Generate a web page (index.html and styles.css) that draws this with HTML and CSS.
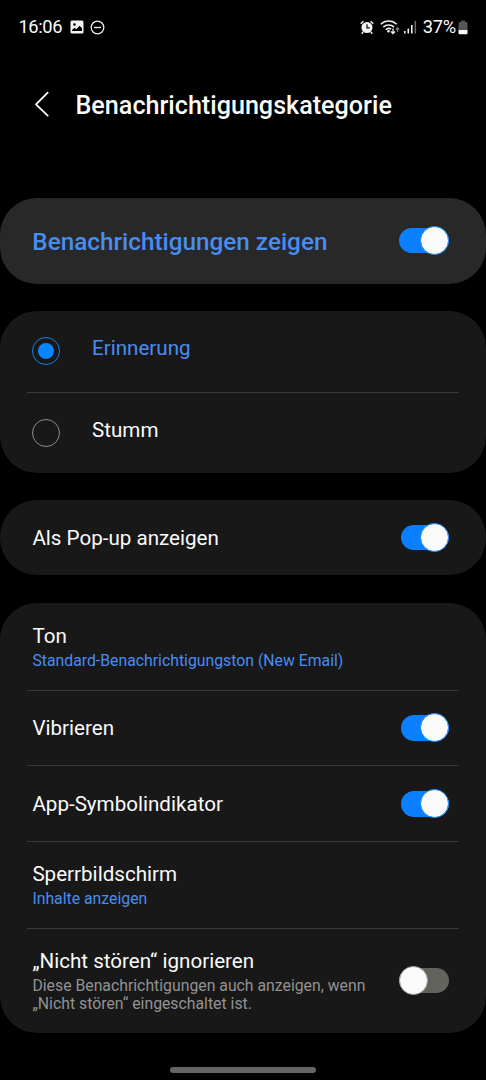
FILE: index.html
```html
<!DOCTYPE html>
<html lang="de">
<head>
<meta charset="utf-8">
<title>Benachrichtigungskategorie</title>
<link rel="stylesheet" href="styles.css">
</head>
<body>
<div class="screen">
  <div class="status">
    <span class="clock">16:06</span>
    <svg class="picture" width="14" height="14" viewBox="0 0 14 14"><path fill="#f4f4f4" fill-rule="evenodd" d="M2 .5h10a1.500 1.500 0 0 1 1.500 1.500v10a1.500 1.500 0 0 1-1.500 1.500H2A1.500 1.500 0 0 1 .5 12V2A1.500 1.500 0 0 1 2 .5zM2 11h10V8.300L9.600 5.800 6.300 9.200 4.600 7.700 2 10zM4.500 3.200a1.300 1.300 0 1 0 0 2.600 1.300 1.300 0 0 0 0-2.600z"/></svg>
    <svg class="dnd" width="15" height="15" viewBox="0 0 15 15" fill="none" stroke="#f0f0f0" stroke-width="1.300"><circle cx="7.500" cy="7.500" r="6.300"/><path d="M4 7.500h7"/></svg>
    <span class="spacer"></span>
    <svg class="alarm" width="14" height="15" viewBox="0 0 14 15"><circle cx="7" cy="7.500" r="5.500" fill="#f4f4f4"/><path d="M.7 3.700 3.500 1.300M13.300 3.700 10.500 1.300M3.200 12 1.700 13.700M10.800 12l1.500 1.700" stroke="#f4f4f4" stroke-width="1.500"/><path d="M7 4.300v3.500h2.700" fill="none" stroke="#000" stroke-width="1.200"/></svg>
    <svg class="wifi" width="20" height="16" viewBox="0 0 20 16" fill="none" stroke="#f0f0f0" stroke-width="1.500"><path d="M.8 5.300a11.300 11.300 0 0 1 15.800 0M3.300 8.100a7.800 7.800 0 0 1 10.800 0M5.700 10.700a4.500 4.500 0 0 1 5.500-.5"/><circle cx="8.500" cy="12.200" r="1.300" fill="#f0f0f0" stroke="none"/><path d="M13 9.500v5M11 12.500l2 2 2-2" stroke-width="1.300"/><path d="M17.500 13V8.500m-1.700 2 1.700-1.800 1.700 1.800" stroke="#777" stroke-width="1.200"/></svg>
    <svg class="signal" width="13" height="14" viewBox="0 0 13 14"><path fill="#eee" d="M0 11h1.600v2.500H0zM3.500 8.500h1.600v5H3.500zM7 5h1.600v8.500H7z"/><path fill="#666" d="M10.500 1h1.600v12.500h-1.600z"/></svg>
    <span class="percent">37%</span>
    <svg class="battery" width="10" height="15" viewBox="0 0 10 15"><path fill="#555" d="M3 .5h4V2h1.500q1 0 1 1v7H.5V3q0-1 1-1H3z"/><path fill="#fff" d="M.5 10h9v3.200q0 1-1 1h-7q-1 0-1-1z"/></svg>
  </div>
  <header class="header">
    <svg class="back" width="16" height="28" viewBox="0 0 16 28" fill="none" stroke="#fff" stroke-width="1.800" stroke-linecap="round" stroke-linejoin="round"><path d="M13.700 2.700 2 14.300l11.700 11.400"/></svg>
    <h1 class="title">Benachrichtigungskategorie</h1>
  </header>
  <main class="cards">
    <section class="card card-main">
      <span class="main-label">Benachrichtigungen zeigen</span>
      <span class="switch switch-wide"><span class="thumb"></span></span>
    </section>
    <section class="card card-choice">
      <div class="choice choice-on"><span class="radio"></span><span class="label label-up">Erinnerung</span></div>
      <div class="choice"><span class="radio"></span><span class="label label-up">Stumm</span></div>
    </section>
    <section class="card card-popup">
      <span class="label">Als Pop-up anzeigen</span>
      <span class="switch"><span class="thumb"></span></span>
    </section>
    <section class="card card-list">
      <div class="row row-double"><div class="copy"><div class="label">Ton</div><div class="sub accent">Standard-Benachrichtigungston (New Email)</div></div></div>
      <div class="row row-single"><span class="label">Vibrieren</span><span class="switch"><span class="thumb"></span></span></div>
      <div class="row row-single"><span class="label">App-Symbolindikator</span><span class="switch"><span class="thumb"></span></span></div>
      <div class="row row-double row-lock"><div class="copy"><div class="label">Sperrbildschirm</div><div class="sub accent">Inhalte anzeigen</div></div></div>
      <div class="row row-last"><div class="copy"><div class="label">„Nicht stören“ ignorieren</div><div class="sub">Diese Benachrichtigungen auch anzeigen, wenn<br>„Nicht stören“ eingeschaltet ist.</div></div><span class="switch switch-off"><span class="thumb"></span></span></div>
    </section>
  </main>
  <div class="gesture"></div>
</div>
</body>
</html>
```
FILE: styles.css
```css
* { box-sizing: border-box; }
body { margin: 0; background: #000; font-family: Roboto, "Liberation Sans", sans-serif; color: #fafafa; }
.screen { width: 486px; height: 1080px; background: #000; overflow: hidden; display: flex; flex-direction: column; align-items: center; }
.status { width: 100%; height: 54px; padding: 0 18px 0 18.500px; display: flex; align-items: center; font-size: 18.300px; line-height: 54px; flex: none; }
.status svg { flex: none; }
.clock { letter-spacing: -0.4px; }
.percent { letter-spacing: -0.2px; }
.picture { margin-left: 7.500px; }
.dnd { margin-left: 6.500px; }
.spacer { flex: 1; }
.wifi { margin-left: 6px; }
.signal { margin-left: 4px; }
.percent { margin-left: 6px; }
.battery { margin-left: 2px; }
.header { width: 100%; height: 103px; padding-left: 34px; display: flex; align-items: center; flex: none; }
.back { flex: none; margin-bottom: 3px; }
.title { margin: 0 0 0 25.500px; font-size: 25.150px; font-weight: 500; line-height: 30px; white-space: nowrap; }
.cards { width: 100%; margin-top: 40.500px; display: flex; flex-direction: column; gap: 27.300px; flex: none; }
.card { background: #181818; border-radius: 37px; }
.card-main { height: 86.300px; background: #282828; padding: 0 37px 0 32.300px; display: flex; align-items: center; justify-content: space-between; }
.main-label { color: #488df0; font-size: 24.300px; font-weight: 500; line-height: 30px; padding-top: 2px; white-space: nowrap; }
.card-choice { height: 161.700px; padding: 0 27px; }
.choice { height: 81px; padding-left: 5px; display: flex; align-items: center; }
.choice + .choice { border-top: 1.500px solid #393939; }
.radio { width: 28px; height: 28px; margin-bottom: 1px; border: 1.300px solid #8c8c8c; border-radius: 50%; display: flex; align-items: center; justify-content: center; flex: none; }
.choice-on .radio { border-color: #1b7fe4; }
.choice-on .radio::after { content: ""; width: 16px; height: 16px; border-radius: 50%; background: #0a84ff; }
.label { font-size: 20.600px; line-height: 25px; white-space: nowrap; }
.label-up { margin-left: 32px; padding-bottom: 6px; }
.choice-on .label { color: #488df0; }
.card-popup { height: 75.200px; padding: 0 37px 0 32.400px; display: flex; align-items: center; justify-content: space-between; }
.card-popup .label { padding-top: 2px; }
.card-list { height: 430px; padding: 0 27px; }
.row { padding: 0 10px 0 5.400px; display: flex; justify-content: space-between; }
.row + .row { border-top: 1.500px solid #393939; }
.row-single { height: 75.800px; align-items: center; }
.row-single .label { padding-top: 2px; }
.row-double { height: 87px; padding-top: 21.600px; }
.row-lock { padding-top: 20.300px; }
.row-last { height: 104px; padding-top: 20px; }
.sub { margin-top: 2.500px; font-size: 15.800px; line-height: 18.700px; color: #929292; white-space: nowrap; }
.accent { color: #488df0; }
.switch { width: 48.500px; height: 25.500px; border-radius: 13px; background: #0a7fff; display: flex; align-items: center; justify-content: flex-end; flex: none; }
.switch-wide { width: 50px; }
.thumb { width: 29px; height: 29px; flex: none; border-radius: 50%; background: #fafafa; border: 1px solid #1482f5; }
.switch-off { width: 50px; justify-content: flex-start; background: #62635d; margin-top: 18.500px; }
.switch-off .thumb { border-color: #a0a0a0; }
.gesture { width: 146px; height: 6px; margin-top: 34.500px; border-radius: 3px; background: #656565; flex: none; }
```
